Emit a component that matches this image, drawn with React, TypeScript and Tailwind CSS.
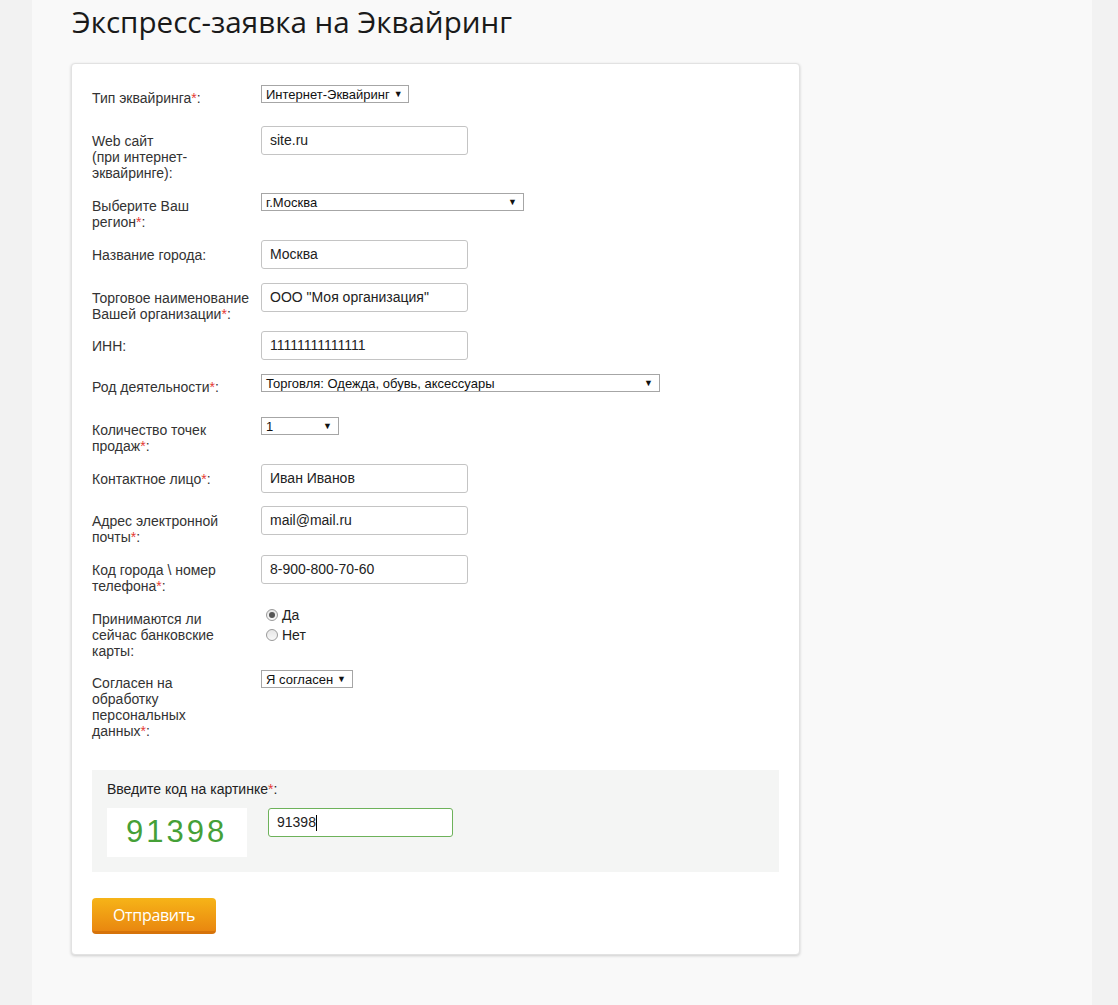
import React from 'react';

type Field =
  | { kind: 'input'; value: string }
  | { kind: 'select'; value: string; width: string }
  | { kind: 'radio' };

interface Row {
  lines: string[];
  required?: boolean;
  field: Field;
  height: string;
}

const rows: Row[] = [
  { lines: ['Тип эквайринга'], required: true, field: { kind: 'select', value: 'Интернет-Эквайринг', width: 'w-[148px]' }, height: 'h-[41px]' },
  { lines: ['Web сайт', '(при интернет-', 'эквайринге)'], field: { kind: 'input', value: 'site.ru' }, height: 'h-[67px]' },
  { lines: ['Выберите Ваш', 'регион'], required: true, field: { kind: 'select', value: 'г.Москва', width: 'w-[263px]' }, height: 'h-[47px]' },
  { lines: ['Название города'], field: { kind: 'input', value: 'Москва' }, height: 'h-[43px]' },
  { lines: ['Торговое наименование', 'Вашей организации'], required: true, field: { kind: 'input', value: 'ООО "Моя организация"' }, height: 'h-[48px]' },
  { lines: ['ИНН'], field: { kind: 'input', value: '11111111111111' }, height: 'h-[43px]' },
  { lines: ['Род деятельности'], required: true, field: { kind: 'select', value: 'Торговля: Одежда, обувь, аксессуары', width: 'w-[399px]' }, height: 'h-[43px]' },
  { lines: ['Количество точек', 'продаж'], required: true, field: { kind: 'select', value: '1', width: 'w-[78px]' }, height: 'h-[47px]' },
  { lines: ['Контактное лицо'], required: true, field: { kind: 'input', value: 'Иван Иванов' }, height: 'h-[42px]' },
  { lines: ['Адрес электронной', 'почты'], required: true, field: { kind: 'input', value: 'mail@mail.ru' }, height: 'h-[49px]' },
  { lines: ['Код города \\ номер', 'телефона'], required: true, field: { kind: 'input', value: '8-900-800-70-60' }, height: 'h-[50px]' },
  { lines: ['Принимаются ли', 'сейчас банковские', 'карты'], field: { kind: 'radio' }, height: 'h-[65px]' },
  { lines: ['Согласен на', 'обработку', 'персональных', 'данных'], required: true, field: { kind: 'select', value: 'Я согласен', width: 'w-[92px]' }, height: 'h-[85px]' },
];

function Label({ lines, required, pad }: { lines: string[]; required?: boolean; pad: string }) {
  return (
    <div className={`w-[169px] shrink-0 text-[14px] leading-4 text-[#333] ${pad}`}>
      {lines.map((line, i) => (
        <div key={i} className="whitespace-nowrap">
          {line}
          {i === lines.length - 1 && (
            <>
              {required && <span className="text-[#e53935]">*</span>}:
            </>
          )}
        </div>
      ))}
    </div>
  );
}

function Dropdown({ value, width }: { value: string; width: string }) {
  return (
    <div
      className={`${width} h-[18px] border border-[#a6a6a6] bg-white flex items-center justify-between pl-[4px] pr-[6px] text-[13px] leading-none text-[#111]`}
    >
      <span className="whitespace-nowrap">{value}</span>
      <span className="text-[9px] ml-1">▼</span>
    </div>
  );
}

function TextInput({ value }: { value: string }) {
  return (
    <div className="w-[207px] h-[29px] border border-[#c4c4c4] rounded-[3px] bg-white flex items-center pl-[8px] text-[14px] text-[#222]">
      {value}
    </div>
  );
}

function Radio({ checked, label }: { checked?: boolean; label: string }) {
  return (
    <div className="flex items-center h-[20px] pl-[5px]">
      <span className="w-[12px] h-[12px] rounded-full border border-[#9a9a9a] bg-gradient-to-b from-[#e6e6e6] to-[#f8f8f8] flex items-center justify-center">
        {checked && <span className="w-[6px] h-[6px] rounded-full bg-[#555]" />}
      </span>
      <span className="ml-[4px] text-[14px] text-[#222]">{label}</span>
    </div>
  );
}

export default function App() {
  return (
    <div className="min-h-screen bg-[#f2f2f2] font-['Liberation_Sans',Arial,sans-serif]">
      <div className="ml-[32px] w-[1060px] min-h-screen bg-[#f9f9f9] pl-[39px] pt-[2px] pb-[50px]">
        <h1 className="pl-[1px] text-[29.6px] leading-[40px] text-[#1a1a1a] font-['Open_Sans',sans-serif] font-normal">
          Экспресс-заявка на Эквайринг
        </h1>
        <div className="mt-[21px] w-[729px] bg-white border border-[#e2e2e2] rounded-[4px] shadow-[0_1px_3px_rgba(0,0,0,0.18)] pt-[21px] pb-[20px] px-[20px]">
          {rows.map((row, i) => (
            <div key={i} className={`flex ${row.height}`}>
              <Label
                lines={row.lines}
                required={row.required}
                pad={row.field.kind === 'input' ? 'pt-[7px]' : row.field.kind === 'radio' ? 'pt-[6px]' : 'pt-[5px]'}
              />
              <div>
                {row.field.kind === 'input' && <TextInput value={row.field.value} />}
                {row.field.kind === 'select' && <Dropdown value={row.field.value} width={row.field.width} />}
                {row.field.kind === 'radio' && (
                  <div>
                    <Radio checked label="Да" />
                    <Radio label="Нет" />
                  </div>
                )}
              </div>
            </div>
          ))}

          <div className="mt-[15px] bg-[#f4f5f4] pt-[11px] pb-[15px] px-[15px]">
            <div className="text-[14px] leading-4 text-[#222]">
              Введите код на картинке<span className="text-[#e53935]">*</span>:
            </div>
            <div className="mt-[11px] flex items-start">
              <div className="w-[140px] h-[49px] bg-white flex items-center pl-[19px] text-[31px] tracking-[3px] text-[#45a037]">
                91398
              </div>
              <div className="ml-[21px] w-[185px] h-[29px] border border-[#6db25a] rounded-[3px] bg-white flex items-center pl-[8px] text-[14px] text-[#222]">
                91398<span className="w-px h-[16px] bg-black" />
              </div>
            </div>
          </div>

          <button className="mt-[26px] w-[124px] h-[36px] rounded-[4px] bg-gradient-to-b from-[#f6b418] to-[#e9870f] border-b-[3px] border-[#d6730a] text-white text-[16px] font-['Open_Sans',sans-serif] tracking-[-0.3px]">
            Отправить
          </button>
        </div>
      </div>
    </div>
  );
}
